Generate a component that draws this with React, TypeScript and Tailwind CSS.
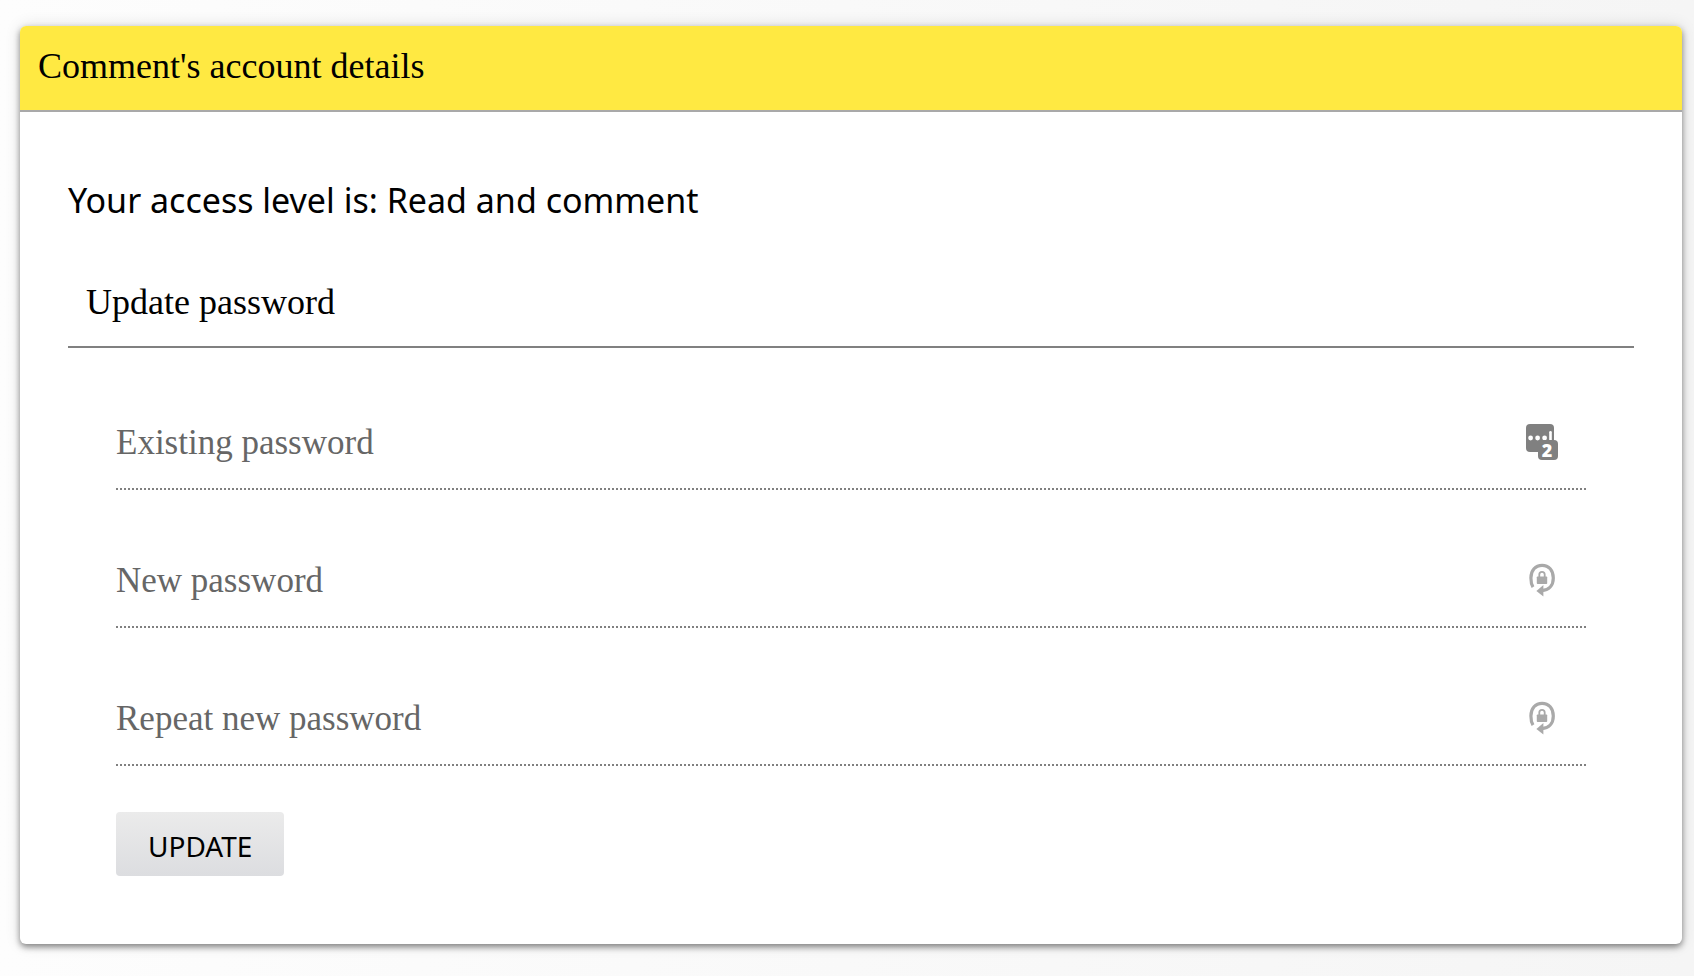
import React from "react";

function SavedLoginsIcon() {
  return (
    <svg width="34" height="38" viewBox="0 0 34 38" aria-hidden="true" className="overflow-visible">
      <rect x="1" y="1" width="28" height="28" rx="4" fill="#808080" />
      <circle cx="5.6" cy="15" r="2.4" fill="#fff" />
      <circle cx="12.6" cy="15" r="2.4" fill="#fff" />
      <circle cx="19.6" cy="15" r="2.4" fill="#fff" />
      <path d="M25.5 9.2v9" stroke="#fff" strokeWidth="2.6" strokeLinecap="round" />
      <rect x="13" y="17" width="20" height="20" rx="4" fill="#808080" />
      <text
        x="22"
        y="34"
        textAnchor="middle"
        fill="#fff"
        fontSize="18"
        fontWeight="800"
        fontFamily="Open Sans, sans-serif"
      >
        2
      </text>
    </svg>
  );
}

function GeneratePasswordIcon() {
  return (
    <svg width="34" height="38" viewBox="0 0 34 38" aria-hidden="true">
      <path
        d="M8 26.2C6.4 23.6 5.9 20.2 5.9 17C5.9 9.4 10.4 4.3 17.1 4.3S28.3 9.4 28.3 17C28.3 24.4 24 29.2 16.6 29.7"
        fill="none"
        stroke="#a9a9a9"
        strokeWidth="3.2"
      />
      <path d="M11.4 29.9L18.4 24V35.6z" fill="#a9a9a9" />
      <rect x="11.8" y="15.4" width="10.4" height="7.6" rx="0.8" fill="#a9a9a9" />
      <path d="M14.3 16v-2.4a2.7 2.7 0 0 1 5.4 0V16" fill="none" stroke="#a9a9a9" strokeWidth="1.8" />
    </svg>
  );
}

type Field = { name: string; label: string; icon: React.ReactNode };

const fields: Field[] = [
  { name: "existing", label: "Existing password", icon: <SavedLoginsIcon /> },
  { name: "new", label: "New password", icon: <GeneratePasswordIcon /> },
  { name: "repeat", label: "Repeat new password", icon: <GeneratePasswordIcon /> },
];

function PasswordField({ name, label, icon }: Field) {
  return (
    <div className="flex h-[94px] items-center border-b-2 border-dotted border-[#808080] pr-[27px]">
      <input
        id={name}
        name={name}
        type="password"
        aria-label={label}
        placeholder={label}
        className="h-full min-w-0 flex-1 bg-transparent pt-0.5 font-['Liberation_Serif',serif] text-[35px] text-black outline-none placeholder:text-[#666666]"
      />
      {icon}
    </div>
  );
}

export default function App() {
  return (
    <main className="min-h-screen bg-linear-to-r from-[#fdfdfd] to-[#f5f5f5] pt-[26px] pr-3 pb-8 pl-5 text-black">
      <section className="overflow-hidden rounded-md bg-white shadow-[0_3px_6px_rgba(0,0,0,0.45),0_0_16px_rgba(0,0,0,0.12)]">
        <h1 className="border-b-2 border-[#a9a9a9] bg-[#ffe942] px-[18px] pt-4 pb-5 font-['Liberation_Serif',serif] text-[36px] leading-[48px]">
          Comment's account details
        </h1>
        <div className="px-12 pt-16 pb-[68px]">
          <p className="font-['Noto_Sans',sans-serif] text-[34px] leading-[48px]">
            Your access level is: Read and comment
          </p>
          <h2 className="mt-[54px] border-b-2 border-[#808080] px-[18px] pb-5 font-['Liberation_Serif',serif] text-[36px] leading-[48px]">
            Update password
          </h2>
          <form className="px-12 pt-12" onSubmit={(event) => event.preventDefault()}>
            <div className="flex flex-col gap-11">
              {fields.map((field) => (
                <PasswordField key={field.name} {...field} />
              ))}
            </div>
            <button
              type="submit"
              className="mt-[46px] block h-16 rounded bg-linear-to-b from-[#ebebeb] to-[#dcdde0] px-8 pt-1 font-['Noto_Sans',sans-serif] text-[28px]"
            >
              UPDATE
            </button>
          </form>
        </div>
      </section>
    </main>
  );
}
